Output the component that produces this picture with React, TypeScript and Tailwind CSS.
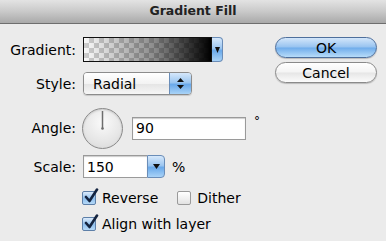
import { useState } from "react";

const aqua =
  "bg-[linear-gradient(to_bottom,#d6e8fb_0%,#9cc6f0_45%,#6aa9ea_55%,#a9d3f7_100%)]";

const Label = ({ children }: { children: React.ReactNode }) => (
  <div className="w-[76px] shrink-0 text-right pr-0">{children}</div>
);

const DownTri = () => (
  <svg width="7" height="5" viewBox="0 0 7 5">
    <path d="M0 0 H7 L3.5 5 Z" fill="#111" />
  </svg>
);

const Checkbox = ({ checked, label }: { checked: boolean; label: string }) => (
  <label className="flex items-center gap-[6px] cursor-default">
    <span
      className={`relative w-[14px] h-[14px] rounded-[2px] border ${
        checked
          ? "border-[#5d7fa8] bg-[linear-gradient(to_bottom,#dcebfb,#8fc0ee_55%,#b5d8f7)]"
          : "border-[#9a9a9a] bg-[linear-gradient(to_bottom,#ffffff,#f0f0f0_55%,#e2e2e2)]"
      }`}
    >
      {checked && (
        <svg
          className="absolute -top-[4px] left-[1px]"
          width="15"
          height="16"
          viewBox="0 0 15 16"
        >
          <path
            d="M2 9 L5.5 13 L13 1.5"
            fill="none"
            stroke="#13233f"
            strokeWidth="2.6"
            strokeLinecap="round"
            strokeLinejoin="round"
          />
        </svg>
      )}
    </span>
    <span>{label}</span>
  </label>
);

export default function App() {
  const [angle, setAngle] = useState("90");
  const [scale, setScale] = useState("150");
  const [reverse, setReverse] = useState(true);
  const [align, setAlign] = useState(true);

  return (
    <div className="w-[386px] h-[241px] overflow-hidden bg-[#ebebeb] text-[14px] text-black font-['DejaVu_Sans',sans-serif] leading-none">
      {/* title bar */}
      <div className="h-[24px] flex items-center justify-center border-b border-[#6e6e6e] bg-[linear-gradient(to_bottom,#e3e3e3,#c9c9c9_50%,#a9a9a9)] font-bold text-[12.5px] text-[#222]">
        Gradient Fill
      </div>

      <div className="flex">
        {/* left form */}
        <div className="flex flex-col">
          <div className="mt-[13px] h-[25px] flex items-center gap-[7px]">
            <Label>Gradient:</Label>
            <div className="flex h-[25px]">
              <div className="w-[129px] h-full border border-[#111] bg-[conic-gradient(#d2d2d2_90deg,#ffffff_90deg_180deg,#d2d2d2_180deg_270deg,#ffffff_270deg)] bg-[length:10px_10px]">
                <div className="w-full h-full bg-[linear-gradient(to_right,rgba(0,0,0,0.02),rgba(0,0,0,0.45)_55%,rgba(0,0,0,1))]" />
              </div>
              <div className={`w-[11px] h-full flex items-center justify-center rounded-r-[4px] border border-l-0 border-[#6a8db8] ${aqua}`}>
                <svg width="5" height="6" viewBox="0 0 5 6">
                  <path d="M0 0 H5 L2.5 6 Z" fill="#111" />
                </svg>
              </div>
            </div>
          </div>

          <div className="mt-[10px] h-[23px] flex items-center gap-[7px]">
            <Label>Style:</Label>
            <div className="flex w-[109px] h-[23px] rounded-[4px] border border-[#8c8c8c] overflow-hidden shadow-[0_1px_1px_rgba(0,0,0,0.15)]">
              <div className="flex-1 flex items-center pl-[9px] bg-[linear-gradient(to_bottom,#ffffff,#f3f3f3_50%,#e4e4e4_51%,#f6f6f6)]">
                Radial
              </div>
              <div className={`w-[22px] flex flex-col items-center justify-center gap-[3px] border-l border-[#6a8db8] ${aqua}`}>
                <svg width="7" height="4" viewBox="0 0 7 4">
                  <path d="M0 4 H7 L3.5 0 Z" fill="#111" />
                </svg>
                <svg width="7" height="4" viewBox="0 0 7 4">
                  <path d="M0 0 H7 L3.5 4 Z" fill="#111" />
                </svg>
              </div>
            </div>
          </div>

          <div className="mt-[13px] h-[40px] flex items-center gap-[6px]">
            <Label>Angle:</Label>
            <div className="relative w-[41px] h-[41px] rounded-full border border-[#8a8a8a] bg-[radial-gradient(circle_at_50%_35%,#fafafa,#e6e6e6_60%,#d5d5d5)] shadow-[inset_0_1px_2px_rgba(0,0,0,0.15)]">
              <svg className="absolute inset-0" width="39" height="39" viewBox="0 0 39 39">
                <line x1="19.5" y1="19.5" x2="19.5" y2="2" stroke="#6d6d6d" strokeWidth="1.5" />
                <circle cx="19.5" cy="19.5" r="1.3" fill="#6d6d6d" />
              </svg>
            </div>
            <input
              value={angle}
              onChange={(e) => setAngle(e.target.value)}
              className="ml-[3px] w-[114px] h-[23px] px-[3px] bg-white border border-[#9a9a9a] shadow-[inset_0_1px_1px_rgba(0,0,0,0.2)] outline-none text-[14px]"
            />
            <span className="self-start mt-[7px] ml-[2px] text-[12px]">°</span>
          </div>

          <div className="mt-[7px] h-[23px] flex items-center gap-[7px]">
            <Label>Scale:</Label>
            <div className="flex h-[23px]">
              <input
                value={scale}
                onChange={(e) => setScale(e.target.value)}
                className="w-[64px] h-full px-[3px] bg-white border border-r-0 border-[#9a9a9a] shadow-[inset_0_1px_1px_rgba(0,0,0,0.2)] outline-none text-[14px]"
              />
              <div className={`w-[18px] h-full flex items-center justify-center rounded-r-[4px] border border-[#6a8db8] ${aqua}`}>
                <DownTri />
              </div>
            </div>
            <span className="ml-[0px]">%</span>
          </div>

          <div className="mt-[12px] pl-[82px] flex items-center gap-[19px] h-[16px]">
            <div onClick={() => setReverse(!reverse)}>
              <Checkbox checked={reverse} label="Reverse" />
            </div>
            <Checkbox checked={false} label="Dither" />
          </div>

          <div className="mt-[10px] pl-[82px] flex items-center h-[16px]">
            <div onClick={() => setAlign(!align)}>
              <Checkbox checked={align} label="Align with layer" />
            </div>
          </div>
        </div>

        {/* buttons */}
        <div className="ml-auto mr-[9px] mt-[13px] flex flex-col gap-[4px]">
          <button className="w-[102px] h-[21px] rounded-full border border-[#4e6f9c] bg-[linear-gradient(to_bottom,#d3e6fa,#97c3f0_48%,#6faceb_52%,#b7dcf9)] shadow-[0_1px_1px_rgba(0,0,0,0.2)] text-[14px]">
            OK
          </button>
          <button className="w-[102px] h-[21px] rounded-full border border-[#8a8a8a] bg-[linear-gradient(to_bottom,#ffffff,#f4f4f4_48%,#e6e6e6_52%,#fbfbfb)] shadow-[0_1px_1px_rgba(0,0,0,0.2)] text-[14px]">
            Cancel
          </button>
        </div>
      </div>
    </div>
  );
}
